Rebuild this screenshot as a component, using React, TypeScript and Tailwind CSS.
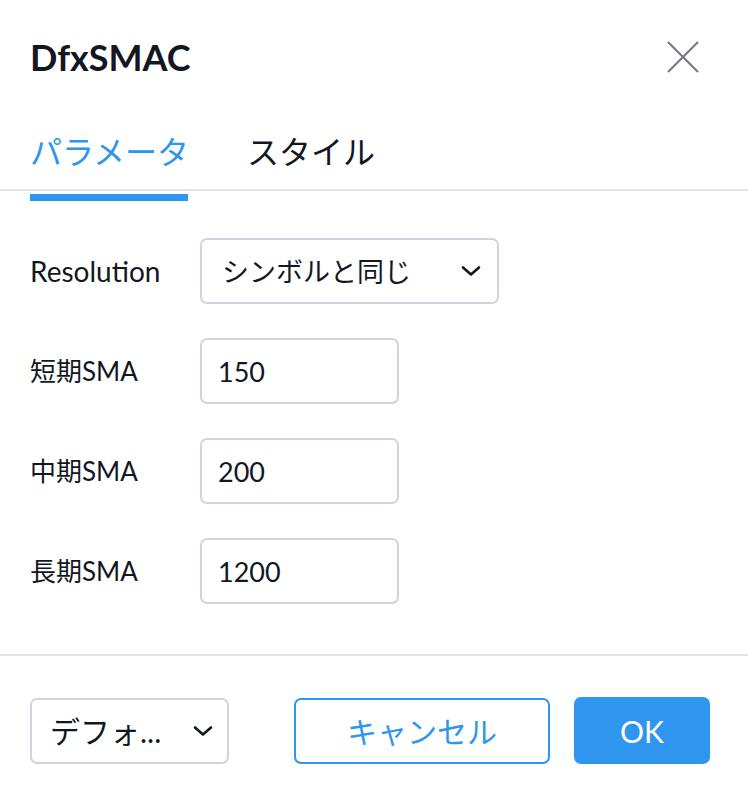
import React from 'react';

const blue = '#2e96ee';

function Chevron({ className = '' }: { className?: string }) {
  return (
    <svg width="20" height="12" viewBox="0 0 20 12" fill="none" className={className}>
      <path d="M2 2.5l8 7 8-7" stroke="#131722" strokeWidth="2.6" strokeLinecap="round" strokeLinejoin="round" />
    </svg>
  );
}

function CloseIcon() {
  return (
    <svg width="32" height="32" viewBox="0 0 32 32" fill="none">
      <path d="M1 1l30 30M31 1L1 31" stroke="#787b86" strokeWidth="2.2" />
    </svg>
  );
}

const rows = [
  { label: '短期SMA', value: '150' },
  { label: '中期SMA', value: '200' },
  { label: '長期SMA', value: '1200' },
];

export default function App() {
  return (
    <div className="w-[748px] h-[804px] bg-white flex flex-col text-[#131722] font-[Lato,'Noto_Sans_CJK_JP',sans-serif] overflow-hidden">
      {/* header */}
      <div className="h-[114px] flex items-center justify-between pl-[30px] pr-[49px]">
        <h1 className="text-[36px] font-bold leading-none">DfxSMAC</h1>
        <CloseIcon />
      </div>

      {/* tabs */}
      <div className="h-[75px] flex items-center gap-[58px] pl-[30px] text-[32px] leading-none">
        <span className="text-[#2e96ee]">パラメータ</span>
        <span>スタイル</span>
      </div>
      <div className="h-[2px] bg-[#e0e3eb]" />
      <div className="ml-[30px] mt-[3px] h-[7px] w-[158px]" style={{ background: blue }} />

      {/* params */}
      <div className="flex flex-col gap-[34px] pt-[37px] pl-[30px] text-[27px] leading-none">
        <div className="flex items-center h-[66px]">
          <span className="w-[170px] text-[28px]">Resolution</span>
          <div className="w-[299px] h-[66px] border-2 border-[#d1d4dc] rounded-[7px] flex items-center justify-between pl-[20px] pr-[16px]">
            <span>シンボルと同じ</span>
            <Chevron />
          </div>
        </div>
        {rows.map((r) => (
          <div key={r.label} className="flex items-center h-[66px]">
            <span className="w-[170px] text-[26px]">{r.label}</span>
            <div className="w-[199px] h-[66px] border-2 border-[#d1d4dc] rounded-[7px] flex items-center pl-[16px]">
              {r.value}
            </div>
          </div>
        ))}
      </div>

      <div className="mt-[50px] h-[2px] bg-[#e0e3eb]" />

      {/* footer */}
      <div className="flex items-center pt-[41px] pl-[30px] text-[30px] leading-none">
        <div className="w-[199px] h-[66px] border-2 border-[#d1d4dc] rounded-[7px] flex items-center justify-between pl-[18px] pr-[14px]">
          <span>デフォ...</span>
          <Chevron />
        </div>
        <button className="ml-[65px] w-[256px] h-[66px] border-2 border-[#2e96ee] rounded-[7px] text-[#2e96ee] flex items-center justify-center">
          キャンセル
        </button>
        <button className="ml-[24px] w-[136px] h-[67px] rounded-[7px] bg-[#2e96ee] text-white flex items-center justify-center">
          OK
        </button>
      </div>
    </div>
  );
}
